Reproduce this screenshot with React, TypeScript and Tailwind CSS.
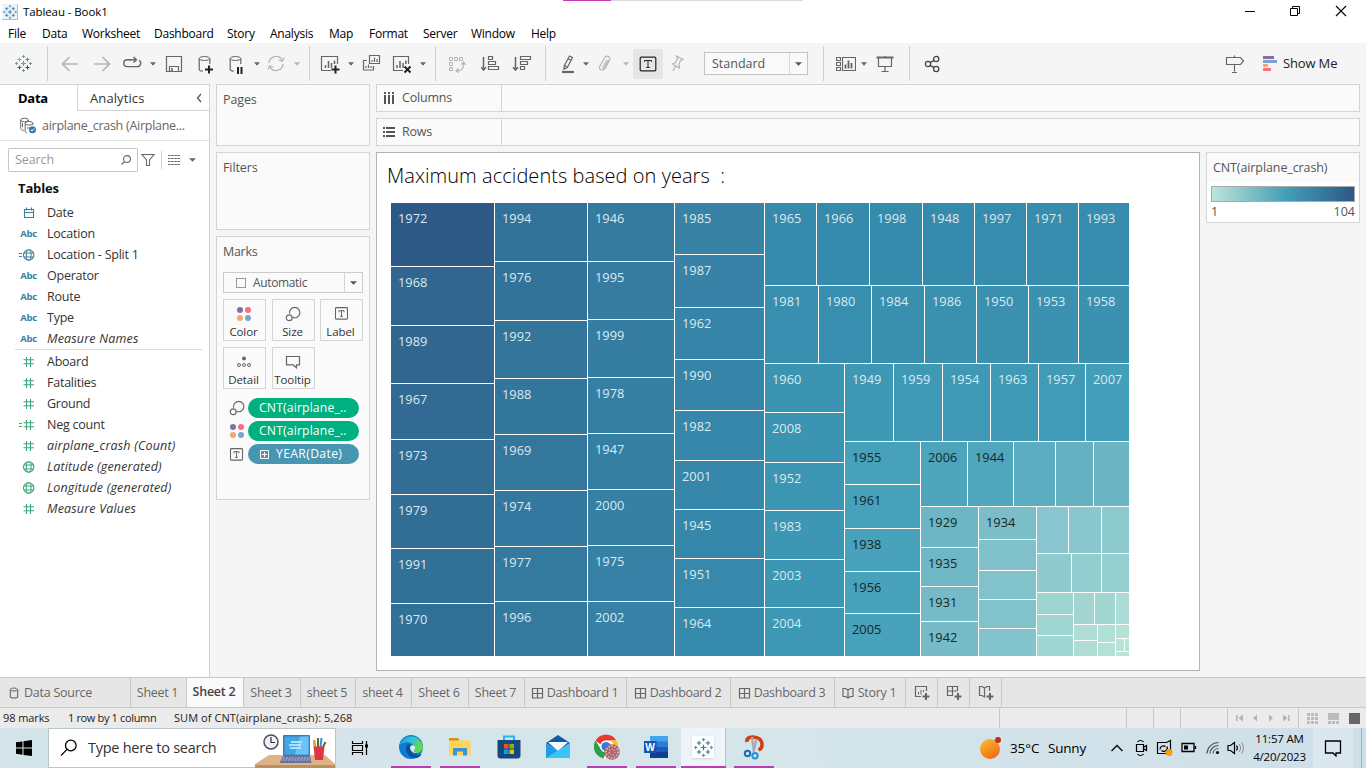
import React from "react";

/* ---------- shared icon pieces ---------- */

type IconProps = { className?: string; children: React.ReactNode; w?: number; h?: number };

function Icon({ className = "", children, w = 20, h = 21 }: IconProps) {
  return (
    <svg
      width={w}
      height={h}
      viewBox={`0 0 ${w} ${h}`}
      fill="none"
      stroke="currentColor"
      strokeWidth="1"
      className={`shrink-0 ${className}`}
    >
      {children}
    </svg>
  );
}

function Caret({ className = "", big = false }: { className?: string; big?: boolean }) {
  return (
    <svg width={big ? 7 : 6} height="4" viewBox="0 0 6 4" preserveAspectRatio="none" className={`shrink-0 fill-current ${className}`}>
      <path d="M0 .2h6L3 3.800z" />
    </svg>
  );
}

function Sep({ className = "" }: { className?: string }) {
  return <div className={`h-[35px] w-px shrink-0 bg-[#d0d0d0] ${className}`} />;
}

function cross(x: number, y: number, r: number) {
  return `M${x - r} ${y}h${2 * r}M${x} ${y - r}v${2 * r}`;
}

function TableauMark({ size, mono = false, className = "" }: { size: number; mono?: boolean; className?: string }) {
  const c = mono
    ? ["#2b7cb0", "#2b7cb0", "#2b7cb0", "#2b7cb0", "#2b7cb0", "#4f95c2"]
    : ["#e8762c", "#eb912c", "#59879b", "#c72035", "#1f447e", "#7199a6"];
  return (
    <svg width={size} height={size} viewBox="0 0 17 17" fill="none" strokeWidth="1" className={`shrink-0 ${className}`}>
      <path d={cross(8.5, 8.5, 2.5)} stroke={c[0]} strokeWidth="1.100" />
      <path d={cross(4.500, 4.500, 2)} stroke={c[1]} />
      <path d={cross(12.500, 4.500, 2)} stroke={c[2]} />
      <path d={cross(4.500, 12.500, 2)} stroke={c[3]} />
      <path d={cross(12.500, 12.500, 2)} stroke={c[4]} />
      <path d={[cross(8.500, 1.500, 1.500), cross(8.500, 15.500, 1.500), cross(1.500, 8.500, 1.500), cross(15.500, 8.500, 1.500)].join("")} stroke={c[5]} />
    </svg>
  );
}

function Dots({ className = "" }: { className?: string }) {
  return (
    <svg width="16" height="16" viewBox="0 0 16 16" className={`shrink-0 ${className}`}>
      <circle cx="4" cy="4" r="3" fill="#83719c" />
      <circle cx="12" cy="4" r="3" fill="#fa6e80" />
      <circle cx="4" cy="12" r="3" fill="#f2a679" />
      <circle cx="12" cy="12" r="3" fill="#7ba3cf" />
    </svg>
  );
}

function SizeIcon({ className = "" }: { className?: string }) {
  return (
    <Icon w={16} h={16} className={className}>
      <path d="M4.600 7.600A5.200 5.200 0 1 1 7.600 11.300" strokeWidth="1.200" />
      <circle cx="4.200" cy="11.800" r="2.900" strokeWidth="1.200" />
    </Icon>
  );
}

function LabelIcon({ className = "" }: { className?: string }) {
  return (
    <Icon w={15} h={13} className={className}>
      <rect x="1.500" y=".6" width="12" height="11.500" rx=".8" strokeWidth="1.100" />
      <path d="M5 5.300V3.700h5v1.600M7.500 3.700v5.600M6.200 9.400h2.600" />
    </Icon>
  );
}

/* ---------- window chrome ---------- */

function TitleBar() {
  return (
    <header className="flex h-6 shrink-0 items-center bg-white font-['Open_Sans',sans-serif] text-[12px] text-black">
      <div className="ml-[2px] flex size-[16px] items-center justify-center border-r border-b border-[#bbb] bg-[#f0f3f5]">
        <TableauMark size={14} mono />
      </div>
      <span className="ml-[5px] text-[11.500px] tracking-[-0.1px]">Tableau - Book1</span>
      <div className="ml-[455px] flex self-start">
        <div className="h-px w-12 bg-[#c239b3]" />
        <div className="h-px w-48 bg-[#dcdcdc]" />
      </div>
      <div className="ml-auto flex items-center gap-[33px] pr-[19px] pb-[3px]">
        <Icon w={12} h={12}><path d="M1 6.500h10" stroke="#000" /></Icon>
        <Icon w={13} h={12}>
          <path d="M1.500 3.500h7v7h-7zM3.500 3V1.500h7v7H9" stroke="#000" />
        </Icon>
        <Icon w={12} h={12}><path d="M1 1l10 10M11 1L1 11" stroke="#000" strokeWidth="1.100" /></Icon>
      </div>
    </header>
  );
}

function MenuBar() {
  const items: [string, string][] = [
    ["File", "w-[34px]"],
    ["Data", "w-10"],
    ["Worksheet", "w-[72px]"],
    ["Dashboard", "w-[73px]"],
    ["Story", "w-[43px]"],
    ["Analysis", "w-[59px]"],
    ["Map", "w-10"],
    ["Format", "w-[54px]"],
    ["Server", "w-12"],
    ["Window", "w-[60px]"],
    ["Help", "w-10"],
  ];
  return (
    <nav className="flex h-[19px] shrink-0 items-center bg-white pl-2 font-['Open_Sans',sans-serif] text-[12px] tracking-[-0.25px] text-black">
      {items.map(([t, w]) => (
        <span key={t} className={`${w} shrink-0 whitespace-nowrap`}>{t}</span>
      ))}
    </nav>
  );
}

function Toolbar() {
  return (
    <div className="flex h-[41px] shrink-0 items-center bg-[#f5f5f5] text-[#666]">
      <TableauMark size={17} className="ml-[15px]" />
      <Sep className="ml-[15px]" />
      <Icon className="ml-3 text-[#b5b5b5]"><path d="M18 11H3M9.500 4L2.500 11l7 7" strokeWidth="1.700" /></Icon>
      <Icon className="ml-3 text-[#b5b5b5]"><path d="M2 11h15M10.500 4l7 7-7 7" strokeWidth="1.700" /></Icon>
      <Icon className="ml-[10px]">
        <path d="M9 6.800H5.200a3.400 3.400 0 0 0 0 6.800h10a3.400 3.400 0 0 0 2-6.200" strokeWidth="1.400" />
        <path d="M7 6.800h7M11.500 4l3 2.800-3 2.800" strokeWidth="1.400" />
      </Icon>
      <Caret className="ml-2" />
      <Icon className="ml-2">
        <path d="M2.500 3.500h15v15h-15zM5.500 18.500v-5h9v5" strokeWidth="1.200" />
        <path d="M8 15v3" strokeWidth="1.600" />
      </Icon>
      <Icon className="ml-[11px]">
        <ellipse cx="9.500" cy="5.500" rx="5.300" ry="2" />
        <path d="M4.200 5.500v11c0 .9 1.500 1.500 3.600 1.700M14.800 5.500V11" strokeWidth="1.200" />
        <path d="M14 12.500v8M10 16.500h8" stroke="#222" strokeWidth="2" />
      </Icon>
      <Icon className="ml-[11px]">
        <ellipse cx="9.500" cy="5.500" rx="5.300" ry="2" />
        <path d="M4.200 5.500v11c0 .9 1.500 1.500 3.600 1.700M14.800 5.500V11" strokeWidth="1.200" />
        <path d="M12 14v7M15.500 14v7" stroke="#222" strokeWidth="2" />
      </Icon>
      <Caret className="ml-2" />
      <Icon className="ml-[6px] text-[#b5b5b5]">
        <path d="M3 10a7 7 0 0 1 13.300-2.500M17 11a7 7 0 0 1-13.300 2.500" strokeWidth="1.300" />
        <path d="M18 4.500l-1.500 3.700-3.700-1.200M2 16.500l1.500-3.700 3.700 1.200" strokeWidth="1.200" />
      </Icon>
      <Caret className="ml-2 text-[#b5b5b5]" />
      <Sep className="ml-[9px]" />
      <Icon className="ml-[10px]">
        <path d="M17.500 11V3.500h-16v14H11" strokeWidth="1.200" />
        <path d="M5.500 15v-3M8.500 15V8M11.500 15v-5M14.500 11V7.500" strokeWidth="1.500" />
        <path d="M15.500 12.500v8M11.500 16.500h8" stroke="#222" strokeWidth="2" />
      </Icon>
      <Caret className="ml-2" />
      <Icon className="ml-2">
        <path d="M7.500 2.500h10v8h-10zM5 7.500H1.500v9.500h10v-4" strokeWidth="1.200" />
        <path d="M10 9V7M12.500 9V4.500M15 9V6M4 15v-2M6.500 15v-3.500M9 15v-2" strokeWidth="1.200" />
      </Icon>
      <Icon className="ml-[10px]">
        <path d="M16.500 11V3.500h-15v14H11" strokeWidth="1.200" />
        <path d="M5 15v-3M8 15V8M11 15v-5M13.800 11V7.500" strokeWidth="1.500" />
        <path d="M12.500 13.500l6 6M18.500 13.500l-6 6" stroke="#222" strokeWidth="2" />
      </Icon>
      <Caret className="ml-2" />
      <Sep className="ml-[9px]" />
      <Icon className="ml-3 text-[#b5b5b5]">
        <path d="M1.500 4.500h3v3h-3zM6.500 4.500h3v3h-3zM11.500 4.500h3v3h-3zM1.500 9.500h3v3h-3zM1.500 14.500h3v3h-3z" />
        <path d="M15.500 9v3.500c0 3-2.500 4.700-5 5.300H8M17.800 12l-2.300-3-2.300 3M10.500 15.500L8 17.800l2.500 2" strokeWidth="1.200" />
      </Icon>
      <Icon className="ml-[13px]">
        <path d="M2.500 4v13M0 14.200l2.500 2.800L5 14.200" strokeWidth="1.500" />
        <path d="M7.500 3.500h4v3h-4zM7.500 8.500h7v3h-7zM7.500 13.500h10v3h-10z" strokeWidth="1.200" />
      </Icon>
      <Icon className="ml-[11px]">
        <path d="M3.500 4v13M1 14.200L3.500 17 6 14.200" strokeWidth="1.500" />
        <path d="M8.500 3.500h10v3h-10zM8.500 8.500h7v3h-7zM8.500 13.500h4v3h-4z" strokeWidth="1.200" />
      </Icon>
      <Sep className="ml-[13px]" />
      <Icon className="ml-3">
        <path d="M11.500 3l3 1.500-5.200 10-3.400 1.800.4-3.600zM10 5.800l3 1.500M6.500 12.500l3 1.700" strokeWidth="1.200" />
        <path d="M4 19h12" strokeWidth="2.200" />
      </Icon>
      <Caret className="ml-[5px]" />
      <Icon className="ml-[6px] text-[#b5b5b5]">
        <path d="M13.500 7l-4.300 8.500c-1.500 3-6 1-4.500-2L9.500 5c1.800-3.500 6.800-1.200 5 2.300l-4 7.700c-1 1.800-3.300.8-2.500-1L11.800 7" strokeWidth="1.100" />
      </Icon>
      <Caret className="ml-2 text-[#b5b5b5]" />
      <div className="ml-1 flex size-[30px] shrink-0 items-center justify-center bg-[#e5e5e5] text-[#222]">
        <Icon w={18} h={16}>
          <rect x="1.200" y="1.200" width="15.600" height="13.600" rx="1" strokeWidth="1.200" />
          <path d="M5.500 6V4.500h7V6M9 4.500v7.500M7.300 11.500h3.400" />
        </Icon>
      </div>
      <Icon className="ml-1 text-[#b5b5b5]">
        <path d="M9.500 3l6.500 3.500-2.500 1-1.500 4 .5 3.500-7-4 3-1.500 2-3.800zM8.500 13l-2.500 5" strokeWidth="1.200" />
      </Icon>
      <div className="ml-[17px] flex h-[23px] w-[104px] shrink-0 items-center border border-[#c4c4c4] bg-[#f9f9f9] font-['Open_Sans',sans-serif] text-[12.500px] text-[#555]">
        <span className="w-[85px] border-r border-[#d8d8d8] pl-[7px] leading-[21px]">Standard</span>
        <Caret big className="ml-[5px]" />
      </div>
      <Sep className="ml-[15px]" />
      <Icon className="ml-3">
        <path d="M.5 4.500h4v3h-4zM.5 9.500h4v3h-4zM.5 14.500h4v3h-4zM6.500 4.500h13v13h-13z" strokeWidth="1.100" />
        <path d="M9.500 15.500v-4M12.500 15.500v-8M15.500 15.500V10" strokeWidth="1.800" />
      </Icon>
      <Caret className="ml-[5px]" />
      <Icon className="ml-2">
        <path d="M1.500 4.500h17" strokeWidth="2" />
        <path d="M3.500 5v8.500h13V5M10 13.500v5M10 3v1M6.500 18.500h7" strokeWidth="1.200" />
      </Icon>
      <Sep className="ml-[14px]" />
      <Icon className="ml-3 text-[#444]">
        <circle cx="6" cy="11" r="2.600" strokeWidth="1.300" />
        <circle cx="14.200" cy="6" r="2.600" strokeWidth="1.300" />
        <circle cx="14.200" cy="16" r="2.600" strokeWidth="1.300" />
        <path d="M8.200 9.600l3.800-2.200M8.200 12.400l3.800 2.200" strokeWidth="1.300" />
      </Icon>
      <Icon className="ml-auto">
        <path d="M1.500 4.500h14l3 3.500-3 3.500h-14zM9.500 2.500v2M9.500 11.500v7M7 19.500h5" strokeWidth="1.200" />
      </Icon>
      <svg width="15" height="16" viewBox="0 0 15 16" className="ml-[18px] shrink-0">
        <path d="M0 0h11v3H0z" fill="#8a6f9d" />
        <path d="M0 4h14v3H0z" fill="#7ba3cf" />
        <path d="M0 8h5v3H0z" fill="#f2a679" />
        <path d="M0 12h8v3H0z" fill="#fa6e80" />
      </svg>
      <span className="ml-[5px] w-[83px] pb-px font-['Open_Sans',sans-serif] text-[13px] tracking-[-0.15px] text-[#222]">Show Me</span>
    </div>
  );
}

/* ---------- data pane ---------- */

function Hash({ calc = false }: { calc?: boolean }) {
  return (
    <Icon w={16} h={12} className="text-[#3ba577]">
      <path d="M7.500 1v10M11.500 1v10M4.500 3.800h10.500M4.500 7.800h10.500" strokeWidth="1.100" />
      {calc && <path d="M0 4.500h3M0 7.500h3" />}
    </Icon>
  );
}

function Globe({ calc = false, tone }: { calc?: boolean; tone: string }) {
  return (
    <Icon w={16} h={12} className={tone}>
      <circle cx="9.700" cy="6" r="5.200" strokeWidth="1.100" />
      <ellipse cx="9.700" cy="6" rx="2.400" ry="5.200" />
      <path d="M5 4h9.400M5 8h9.400" />
      {calc && <path d="M0 4.500h3M0 7.500h3" />}
    </Icon>
  );
}

function Abc() {
  return <span className="font-['Open_Sans',sans-serif] text-[9.500px] font-bold tracking-[-0.2px] text-[#3a7f9f]">Abc</span>;
}

function CalendarIcon() {
  return (
    <Icon w={12} h={12} className="text-[#3a7f9f]">
      <path d="M1.500 2.500h9v8h-9zM1.500 5.500h9M3.500 .5v3M8.500 .5v3" strokeWidth="1.100" />
    </Icon>
  );
}

type Field = { icon: React.ReactNode; text: string; italic?: boolean };

function FieldRow({ icon, text, italic }: Field) {
  return (
    <div className="flex h-[21px] items-center text-[12.500px] text-[#333]">
      <div className="flex w-[37px] shrink-0 items-center justify-end">{icon}</div>
      <span className={`ml-[10px] whitespace-nowrap ${italic ? "tracking-[0.180px] italic" : "tracking-[-0.240px]"}`}>{text}</span>
    </div>
  );
}

const padR = (n: React.ReactNode) => <span className="flex pr-[2px]">{n}</span>;

const dimensions: Field[] = [
  { icon: padR(<CalendarIcon />), text: "Date" },
  { icon: <Abc />, text: "Location" },
  { icon: padR(<Globe calc tone="text-[#3a7f9f]" />), text: "Location - Split 1" },
  { icon: <Abc />, text: "Operator" },
  { icon: <Abc />, text: "Route" },
  { icon: <Abc />, text: "Type" },
  { icon: <Abc />, text: "Measure Names", italic: true },
];

const measures: Field[] = [
  { icon: padR(<Hash />), text: "Aboard" },
  { icon: padR(<Hash />), text: "Fatalities" },
  { icon: padR(<Hash />), text: "Ground" },
  { icon: padR(<Hash calc />), text: "Neg count" },
  { icon: padR(<Hash />), text: "airplane_crash (Count)", italic: true },
  { icon: padR(<Globe tone="text-[#3ba577]" />), text: "Latitude (generated)", italic: true },
  { icon: padR(<Globe tone="text-[#3ba577]" />), text: "Longitude (generated)", italic: true },
  { icon: padR(<Hash />), text: "Measure Values", italic: true },
];

function DataPane() {
  return (
    <aside className="flex w-[210px] shrink-0 flex-col border-r border-[#d0d0d0] bg-white">
      <div className="flex h-[27px] shrink-0">
        <div className="flex w-[77px] items-center border-t border-[#d4d4d4] pl-[18px] text-[13px] font-bold tracking-[-0.3px] text-black">Data</div>
        <div className="flex flex-1 items-center border-t border-b border-l border-[#d4d4d4] pl-3 text-[13px] text-[#333]">
          <span className="tracking-[0.100px]">Analytics</span>
          <Icon w={8} h={12} className="mr-[6px] ml-auto text-[#555]">
            <path d="M6 2L2.500 6 6 10" strokeWidth="1.300" />
          </Icon>
        </div>
      </div>
      <div className="flex h-[30px] shrink-0 items-center border-b border-[#e2e2e2] text-[12.500px] text-[#666]">
        <Icon w={18} h={17} className="ml-5">
          <ellipse cx="4.500" cy="3" rx="3.800" ry="1.800" />
          <path d="M.7 3v8.500c0 1 1.300 1.700 3 2M8.300 3v1" />
          <ellipse cx="9" cy="6.300" rx="3.800" ry="1.800" />
          <path d="M5.200 6.300v8c0 .8.700 1.300 1.800 1.600M12.800 6.300V8M2.500 6v4M7 11h3" />
          <circle cx="12.500" cy="12.700" r="3.500" fill="#2f7f9f" stroke="none" />
          <path d="M10.800 12.800l1.300 1.200 2.200-2.500" stroke="#fff" />
        </Icon>
        <span className="ml-1 tracking-[-0.270px] whitespace-nowrap">airplane_crash (Airplane...</span>
      </div>
      <div className="mt-[7px] flex h-[24px] shrink-0 items-center text-[#666]">
        <div className="ml-2 flex h-[24px] w-[130px] items-center rounded-[1px] border border-[#c8c8c8] pl-[6px] text-[12.500px] text-[#999]">
          <span className="tracking-[-0.1px]">Search</span>
          <Icon w={12} h={12} className="mr-[5px] ml-auto text-[#666]">
            <circle cx="7" cy="5" r="3.400" strokeWidth="1.100" />
            <path d="M4.600 7.500L1.500 10.500" strokeWidth="1.200" />
          </Icon>
        </div>
        <Icon w={14} h={14} className="ml-[3px]">
          <path d="M1 1.500h12L8.500 7v5.500h-3V7z" strokeWidth="1.100" />
        </Icon>
        <div className="ml-[6px] h-[18px] w-px bg-[#d4d4d4]" />
        <Icon w={12} h={10} className="ml-[6px]">
          <path d="M0 .5h12M0 3.500h12M0 6.500h12M0 9.500h12" strokeDasharray="2.500 .67" strokeWidth="1.200" />
        </Icon>
        <Caret big className="ml-[9px]" />
      </div>
      <div className="mt-[6px] flex h-[20px] shrink-0 items-center pl-[18px] text-[13px] font-bold tracking-[-0.150px] text-[#111]">Tables</div>
      <div className="mt-[4px]">
        {dimensions.map((f) => <FieldRow key={f.text} {...f} />)}
      </div>
      <div className="mr-[7px] ml-[15px] h-px shrink-0 bg-[#dcdcdc]" />
      <div className="mt-[1px]">
        {measures.map((f) => <FieldRow key={f.text} {...f} />)}
      </div>
    </aside>
  );
}

/* ---------- shelves and cards ---------- */

function MarkButton({ icon, label }: { icon: React.ReactNode; label: string }) {
  return (
    <div className="flex h-[42px] w-[43px] flex-col items-center border border-[#d4d4d4] text-[#666]">
      <div className="flex h-[26px] items-center pt-px pr-px">{icon}</div>
      <span className="pr-[2px] text-[11.500px] leading-[12px] tracking-[-0.1px] text-[#333]">{label}</span>
    </div>
  );
}

function Pill({ icon, children, tone }: { icon: React.ReactNode; children: React.ReactNode; tone: string }) {
  return (
    <div className="flex h-5 items-center text-[#666]">
      <div className="flex w-[25px] shrink-0 items-center justify-start pl-[6px]">{icon}</div>
      <div className={`flex h-5 w-[111px] items-center rounded-full pl-[11px] text-[12.200px] font-medium tracking-[0.150px] whitespace-nowrap text-white ${tone}`}>{children}</div>
    </div>
  );
}

function Cards() {
  return (
    <section className="ml-[6px] flex w-[154px] shrink-0 flex-col text-[12.500px] text-[#555]">
      <div className="h-[62px] border border-[#d4d4d4] bg-[#fafafa] pt-[6px] pl-[6px] tracking-[-0.1px]">Pages</div>
      <div className="mt-[6px] h-[78px] border border-[#d4d4d4] bg-[#fafafa] pt-[6px] pl-[6px] tracking-[-0.1px]">Filters</div>
      <div className="mt-[6px] h-[264px] border border-[#d4d4d4] bg-[#fafafa] pl-[6px]">
        <div className="pt-[6px] leading-[18px] tracking-[-0.3px]">Marks</div>
        <div className="mt-[11px] flex h-[21px] w-[140px] items-center border border-[#ccc] text-[12px]">
          <div className="ml-[12px] size-[10px] border border-[#999]" />
          <span className="ml-[7px] tracking-[-0.350px]">Automatic</span>
          <div className="ml-auto flex h-[19px] w-[18px] items-center justify-center border-l border-[#d4d4d4]"><Caret big /></div>
        </div>
        <div className="mt-[6px] grid w-[140px] grid-cols-[49px_48px_43px] gap-y-[6px]">
          <MarkButton icon={<Dots />} label="Color" />
          <MarkButton icon={<SizeIcon />} label="Size" />
          <MarkButton icon={<LabelIcon />} label="Label" />
          <MarkButton
            icon={
              <Icon w={16} h={12}>
                <circle cx="8" cy="2.500" r="2" fill="currentColor" stroke="none" />
                <circle cx="3" cy="9" r="1.500" /><circle cx="8" cy="9" r="1.500" /><circle cx="13" cy="9" r="1.500" />
              </Icon>
            }
            label="Detail"
          />
          <MarkButton
            icon={<Icon w={16} h={14}><path d="M1.500 1.500h13v8.300H11.500v3L8 9.800H1.500z" strokeWidth="1.200" /></Icon>}
            label="Tooltip"
          />
        </div>
        <div className="mt-[9px] flex flex-col gap-[3px]">
          <Pill icon={<SizeIcon />} tone="bg-[#00b180]">CNT(airplane_..</Pill>
          <Pill icon={<Dots />} tone="bg-[#00b180]">CNT(airplane_..</Pill>
          <Pill icon={<LabelIcon />} tone="bg-[#4996b2]">
            <Icon w={9} h={9} className="mr-[7px] ml-px"><path d="M.5.5h8v8h-8zM4.500 2v5M2 4.500h5" /></Icon>
            <span className="tracking-[0.350px]">YEAR(Date)</span>
          </Pill>
        </div>
      </div>
    </section>
  );
}

function Shelf({ icon, label }: { icon: React.ReactNode; label: string }) {
  return (
    <div className="flex h-[28px] shrink-0 items-center border border-[#d4d4d4] bg-[#fafafa] text-[12.500px] text-[#555]">
      <div className="flex h-full w-[125px] items-center border-r border-[#d4d4d4] pl-[6px]">
        {icon}
        <span className="ml-[7px] tracking-[-0.200px]">{label}</span>
      </div>
    </div>
  );
}

/* ---------- treemap ---------- */

type Tile = [number, number, number, number, string, string?];

function stack(x: number, x2: number, ys: number[], colors: string[], labels: string[] = []): Tile[] {
  return colors.map((c, i) => [x, ys[i], x2 - x, ys[i + 1] - ys[i] - 1, c, labels[i]]);
}
function strip(y: number, y2: number, xs: number[], colors: string[], labels: string[] = []): Tile[] {
  return colors.map((c, i) => [xs[i], y, xs[i + 1] - xs[i] - 1, y2 - y, c, labels[i]]);
}
const yrs = (s: string) => s.split(" ");

const tiles: Tile[] = [
  ...stack(391, 494, [203, 267, 326, 384, 440, 495, 549, 604, 657],
    ["#2c5985", "#316690", "#31668f", "#326a93", "#316d95", "#316e96", "#317097", "#317198"],
    yrs("1972 1968 1989 1967 1973 1979 1991 1970")),
  ...stack(495, 587, [203, 262, 321, 379, 435, 491, 547, 602, 657],
    ["#327299", "#327399", "#32749a", "#33769c", "#33779d", "#33789e", "#34799e", "#347a9f"],
    yrs("1994 1976 1992 1988 1969 1974 1977 1996")),
  ...stack(588, 674, [203, 262, 320, 378, 434, 490, 546, 602, 657],
    ["#357b9f", "#357ca0", "#357ea1", "#357fa2", "#357fa3", "#3680a4", "#3681a5", "#3681a5"],
    yrs("1946 1995 1999 1978 1947 2000 1975 2002")),
  ...stack(675, 764, [203, 255, 308, 360, 411, 461, 510, 559, 608, 657],
    ["#3782a5", "#3782a6", "#3684a7", "#3685a8", "#3687a9", "#3687aa", "#3688ab", "#3689ab", "#368aac"],
    yrs("1985 1987 1962 1990 1982 2001 1945 1951 1964")),
  ...strip(203, 285, [765, 817, 870, 923, 975, 1027, 1079, 1130],
    ["#368aac", "#368aac", "#368bac", "#368bad", "#368cad", "#378dad", "#378dad"],
    yrs("1965 1966 1998 1948 1997 1971 1993")),
  ...strip(286, 363, [765, 819, 872, 925, 977, 1029, 1079, 1130],
    ["#378eae", "#378eae", "#388fae", "#3990af", "#3990af", "#3a91b0", "#3a92b0"],
    yrs("1981 1980 1984 1986 1950 1953 1958")),
  ...stack(765, 844, [364, 413, 463, 511, 560, 608, 657],
    ["#3b94b1", "#3b94b1", "#3c95b2", "#3d96b3", "#3d96b3", "#3e97b4"],
    yrs("1960 2008 1952 1983 2003 2004")),
  ...strip(364, 441, [845, 894, 943, 991, 1039, 1086, 1130],
    ["#3e98b4", "#3f99b5", "#3f99b5", "#409ab6", "#419bb7", "#439eb9"],
    yrs("1949 1959 1954 1963 1957 2007")),
  ...stack(845, 920, [442, 485, 529, 572, 614, 657],
    ["#47a1ba", "#47a1ba", "#48a2bb", "#48a2bb", "#48a2bb"],
    yrs("1955 1961 1938 1956 2005")),
  ...strip(442, 506, [921, 968, 1014, 1056, 1094, 1130],
    ["#4ea5bb", "#50a6bc", "#5cadc1", "#65b1c1", "#6ab4c3"], yrs("2006 1944")),
  ...stack(921, 978, [507, 548, 587, 622, 657],
    ["#6db6c4", "#6fb7c5", "#75bac6", "#77bbc7"], yrs("1929 1935 1931 1942")),
  ...stack(979, 1036, [507, 540, 571, 600, 629, 657],
    ["#7bbec9", "#80c1cb", "#81c2cb", "#82c2cb", "#83c3cb"], ["1934"]),
  ...strip(507, 553, [1037, 1069, 1102, 1130], ["#89c5ce", "#89c6cd", "#8ccacd"]),
  ...strip(554, 592, [1037, 1072, 1102, 1130], ["#8fcbce", "#93cdcf", "#95cfd0"]),
  ...stack(1037, 1073, [593, 615, 636, 657], ["#9ed5d1", "#9fd6d2", "#a1d7d3"]),
  ...strip(593, 624, [1074, 1095, 1116, 1130], ["#a2d5d2", "#a1d6d1", "#addbd6"]),
  ...stack(1074, 1097, [625, 641, 657], ["#afddd6", "#afddd6"]),
  ...stack(1098, 1115, [625, 643, 657], ["#b0e0d6", "#b4e1d6"]),
  ...stack(1116, 1129, [625, 639], ["#b5e2d7"]),
  ...strip(639, 651, [1116, 1125, 1130], ["#b8e4d8", "#b8e4d8"]),
  ...stack(1116, 1129, [652, 657], ["#b9e5d9"]),
];

const darkText = new Set(yrs("1955 1961 1938 1956 2005 2006 1944 1929 1935 1931 1942 1934"));

function Treemap() {
  return (
    <svg width="738" height="453" viewBox="391 203 738 453" className="ml-[14px] block font-['Open_Sans',sans-serif] text-[12.800px]">
      {tiles.map(([x, y, w, h, fill, label], i) => (
        <g key={i}>
          <rect x={x} y={y} width={w} height={h} fill={fill} />
          {label && (
            <text x={x + 7} y={y + 20} fill={darkText.has(label) ? "#16262b" : "#dce9ef"}>{label}</text>
          )}
        </g>
      ))}
    </svg>
  );
}

function Viz() {
  return (
    <section className="ml-[6px] flex min-w-0 flex-1 flex-col pr-[6px]">
      <Shelf
        label="Columns"
        icon={<Icon w={12} h={12} className="text-[#555]"><path d="M2 0v12M6 0v12M10 0v12" strokeWidth="2" strokeDasharray="2 1 9" /></Icon>}
      />
      <div className="h-[6px]" />
      <Shelf
        label="Rows"
        icon={<Icon w={12} h={12} className="text-[#555]"><path d="M0 2h12M0 6h12M0 10h12" strokeWidth="2" strokeDasharray="2 1 9" /></Icon>}
      />
      <div className="mt-[6px] flex items-start">
        <div className="h-[519px] w-[824px] border border-[#b4b4b4] bg-white">
          <h1 className="h-[50px] pt-[9px] pl-[10px] text-[20px] leading-[28px] font-light tracking-[0.050px] whitespace-pre text-black">Maximum accidents based on years  :</h1>
          <Treemap />
        </div>
        <div className="ml-[6px] h-[71px] w-[154px] border border-[#d4d4d4] bg-white text-[12.500px] text-[#555]">
          <div className="h-[29px] bg-[#fafafa] pt-[6px] pl-[6px] leading-[18px] tracking-[-0.100px]">CNT(airplane_crash)</div>
          <div className="mx-1 mt-[4px] h-[16px] border border-[#aaa] bg-linear-to-r from-[#bce4d8] via-[#45a2b9] to-[#2c5985]" />
          <div className="mx-1 flex justify-between leading-[19px]"><span>1</span><span>104</span></div>
        </div>
      </div>
    </section>
  );
}

/* ---------- sheet tabs and status ---------- */

function GridIcon() {
  return (
    <Icon w={13} h={12} className="mr-[3px]">
      <path d="M1.500 1.500h10v9.500h-10zM6.500 1.500v9.500M1.500 6.500h10" strokeWidth="1.200" />
    </Icon>
  );
}

const tabs: { t: string; w: string; on?: boolean; icon?: React.ReactNode }[] = [
  { t: "Sheet 1", w: "w-[56px]" },
  { t: "Sheet 2", w: "w-[57px]", on: true },
  { t: "Sheet 3", w: "w-[57px]" },
  { t: "sheet 5", w: "w-[55px]" },
  { t: "sheet 4", w: "w-[56px]" },
  { t: "Sheet 6", w: "w-[57px]" },
  { t: "Sheet 7", w: "w-[56px]" },
  { t: "Dashboard 1", w: "w-[102px]", icon: <GridIcon /> },
  { t: "Dashboard 2", w: "w-[104px]", icon: <GridIcon /> },
  { t: "Dashboard 3", w: "w-[104px]", icon: <GridIcon /> },
  {
    t: "Story 1",
    w: "w-[71px]",
    icon: (
      <Icon w={12} h={12} className="mr-[4px]"><path d="M1 1.500h2.500L6 3l2.500-1.500H11v8H8.500L6 11 3.500 9.500H1zM6 3v8" strokeWidth="1.200" /></Icon>
    ),
  },
];

function SheetTabs() {
  const plus = <path d="M12 8v7M8.500 11.500h7" strokeWidth="2" />;
  return (
    <div className="flex h-[31px] shrink-0 border-t border-b border-[#c8c8c8] bg-[#e6e6e6] text-[12.500px] text-[#666]">
      <div className="flex w-[131px] items-center border-r border-[#c8c8c8] pl-[9px]">
        <Icon w={10} h={12}>
          <ellipse cx="5" cy="2.500" rx="3.700" ry="1.500" />
          <path d="M1.300 2.500v7c0 2 7.400 2 7.400 0v-7" strokeWidth="1.100" />
        </Icon>
        <span className="ml-[5px] tracking-[-0.250px]">Data Source</span>
      </div>
      {tabs.map(({ t, w, on, icon }) => (
        <div
          key={t}
          className={`flex ${w} shrink-0 items-center justify-center border-r border-[#c8c8c8] whitespace-nowrap ${on ? "bg-[#fafafa] pr-[2px] pb-[2px] font-semibold tracking-[-0.250px] text-[#444]" : "pr-[2px] tracking-[-0.300px]"}`}
        >
          {icon}
          {t}
        </div>
      ))}
      <div className="flex w-8 items-center justify-center border-r border-[#c8c8c8]">
        <Icon w={16} h={16}><path d="M12.500 6V1.500h-11v10H7" strokeWidth="1.200" /><path d="M4.500 9.500V7M7 9.500V5M9.500 7V5" />{plus}</Icon>
      </div>
      <div className="flex w-8 items-center justify-center border-r border-[#c8c8c8]">
        <Icon w={16} h={16}><path d="M11.500 6V1.500h-10v9H7M6.500 1.500v9M1.500 6h10" strokeWidth="1.200" />{plus}</Icon>
      </div>
      <div className="flex w-8 items-center justify-center border-r border-[#c8c8c8]">
        <Icon w={16} h={16}><path d="M11.500 6V1.500H9L6.500 3 4 1.500H1.500v9H4L6.500 12V3" strokeWidth="1.200" />{plus}</Icon>
      </div>
    </div>
  );
}

function StatusBar() {
  return (
    <div className="flex h-5 shrink-0 items-stretch bg-[#ebebeb] text-[11px] leading-[19px] text-[#222]">
      <span className="ml-[3px] w-[65px] tracking-[-0.100px]">98 marks</span>
      <span className="w-[106px] tracking-[-0.350px]">1 row by 1 column</span>
      <span className="tracking-[0.070px]">SUM of CNT(airplane_crash): 5,268</span>
      <div className="ml-auto flex">
        <div className="w-[127px] border-l border-[#c8c8c8]" />
        <div className="w-[27px] border-l border-[#c8c8c8]" />
        <div className="w-[27px] border-l border-[#c8c8c8]" />
        <div className="w-[47px] border-l border-[#c8c8c8]" />
        <div className="flex w-[71px] items-center justify-around border-l border-[#c8c8c8] px-1 text-[#b4b4b4]">
          <svg width="8" height="8" className="fill-current"><path d="M0 1h1.500v6H0zM7 .5v7L2.500 4z" /></svg>
          <svg width="8" height="8" className="fill-current"><path d="M6 .5v7L2 4z" /></svg>
          <svg width="8" height="8" className="fill-current"><path d="M2 .5v7L6 4z" /></svg>
          <svg width="8" height="8" className="fill-current"><path d="M6 1h1.500v6H6zM1 .5v7L5.500 4z" /></svg>
        </div>
        <div className="flex w-[68px] items-center justify-between border-l border-[#c8c8c8] pr-[6px] pl-[8px]">
          <svg width="11" height="11" className="fill-[#bcbcbc]">
            <path d="M0 0h3v3H0zM4 0h3v3H4zM8 0h3v3H8zM0 4h3v3H0zM4 4h3v3H4zM8 4h3v3H8zM0 8h3v3H0zM4 8h3v3H4zM8 8h3v3H8z" />
          </svg>
          <svg width="11" height="11" className="fill-[#bcbcbc]"><path d="M0 0h11v7H0zM0 8h3v3H0zM4 8h3v3H4zM8 8h3v3H8z" /></svg>
          <div className="size-[11px] bg-[#666]" />
        </div>
      </div>
    </div>
  );
}

/* ---------- taskbar ---------- */

function TaskApp({ className, bar, children }: { className: string; bar?: string; children: React.ReactNode }) {
  return (
    <div className={`flex h-10 shrink-0 flex-col items-center ${className}`}>
      <div className="flex h-[38px] items-center">{children}</div>
      {bar && <div className={`h-[2px] bg-[#b93db5] ${bar}`} />}
    </div>
  );
}

function DeskScene() {
  return (
    <svg width="80" height="39" viewBox="0 0 80 39" className="ml-auto shrink-0">
      <path d="M14 26h56l10 9v4H0v-4z" fill="#dcb488" />
      <path d="M0 36h80v3H0z" fill="#bd9060" />
      <circle cx="16" cy="13" r="7" fill="#eef0f4" stroke="#4a5060" strokeWidth="1.500" />
      <path d="M16 8v5.500h4" stroke="#333" strokeWidth="1.200" fill="none" />
      <rect x="28" y="6" width="27" height="21" rx="1" fill="#5b6fa3" />
      <rect x="29.500" y="7.500" width="24" height="18" fill="#39a9ea" />
      <path d="M45 7.500h8.500v18H40z" fill="#67c4f5" />
      <path d="M36 13h11M34 16h12M35 19h11" stroke="#d9f0ff" strokeWidth="1.300" />
      <path d="M28 27h27l1.500 7h-32z" fill="#66739f" />
      <path d="M28 29h26M27 31h28" stroke="#b5bedb" strokeWidth="1" strokeDasharray="2 1" />
      <path d="M60 18l-1-7M63 18V9M68 18l2.500-5" stroke="#5a6a3a" strokeWidth="2" />
      <path d="M65.500 18l1-9" stroke="#2f8fd0" strokeWidth="2" />
      <path d="M60 18l-1-7" stroke="#e8a23a" strokeWidth="2" />
      <path d="M58.500 17.500h11l-1.500 13.500h-8z" fill="#dd3542" />
    </svg>
  );
}

function Taskbar() {
  return (
    <footer className="flex h-10 shrink-0 items-center bg-linear-to-r from-[#d3e3ea] via-[#d5e6eb] to-[#cfdfe9] font-['Open_Sans',sans-serif] text-black">
      <svg width="16" height="16" viewBox="0 0 16 16" className="ml-4 shrink-0">
        <path d="M0 2.300L6.500 1.400v6.200H0zM7.500 1.200L16 0v7.600H7.500zM0 8.500h6.500v6.200L0 13.800zM7.500 8.500H16V16l-8.500-1.100z" />
      </svg>
      <div className="ml-4 flex h-10 w-[288px] shrink-0 items-center border border-[#b9c6cc] bg-white">
        <Icon w={18} h={18} className="ml-[11px] text-black">
          <circle cx="10.800" cy="6.500" r="5.300" strokeWidth="1.300" />
          <path d="M7 10.400L1 16.500" strokeWidth="1.300" />
        </Icon>
        <span className="ml-[10px] text-[14.500px] tracking-[-0.260px] whitespace-nowrap text-[#333]">Type here to search</span>
        <DeskScene />
      </div>
      <Icon w={18} h={16} className="ml-[15px] text-black">
        <path d="M1.500 1v2.500h10V1M1.500 15v-2.500h10V15M1.500 5.500h10v5h-10zM15.500 1v14" strokeWidth="1.200" />
        <path d="M14 4.500h3v3h-3z" fill="#000" stroke="none" />
      </Icon>
      <TaskApp className="ml-[22px] w-10" bar="w-10">
        <svg width="26" height="26" viewBox="0 0 26 26">
          <defs>
            <linearGradient id="edgeTop" x1="0" y1="0" x2="1" y2=".3">
              <stop offset="0" stopColor="#2390d8" /><stop offset=".5" stopColor="#2fc0d8" /><stop offset="1" stopColor="#66d94a" />
            </linearGradient>
          </defs>
          <circle cx="13" cy="13" r="12" fill="#0f7bd0" />
          <path d="M1.500 11A12 12 0 0 1 25 13c0 4-3.500 6-7 6-2.500 0-3.500-1-2.500-2.500C18 12 13 7 8 8.500 4 9 2 10.500 1.500 11z" fill="url(#edgeTop)" />
          <path d="M9 11c-3 5 1 13 9 13 2 0 5-2 5.500-4-3 1.500-9 1-10-3-.5-2 .5-3 1-4-1.500-2.500-4-3-5.500-2z" fill="#0b4f9e" />
          <path d="M12 13.500c0-2 3-3 4.500-1.500s.5 3-.7 4.500c-.5 1.200.4 2 2.200 2.500-3.500.2-6-2.500-6-5.500z" fill="#d8e8ee" />
        </svg>
      </TaskApp>
      <TaskApp className="ml-[9px] w-10" bar="w-10">
        <svg width="22" height="20" viewBox="0 0 22 20">
          <path d="M0 1h9l2 3H0z" fill="#d9940b" />
          <path d="M0 3.500h21.500V18H0z" fill="#ffd35c" />
          <path d="M4 18.500V11h14v7.500h-4v-4H8v4z" fill="#3b93d6" />
        </svg>
      </TaskApp>
      <TaskApp className="ml-[9px] w-10">
        <svg width="24" height="26" viewBox="0 0 24 26">
          <path d="M7 6V2.500h10V6" fill="none" stroke="#2ab3ec" strokeWidth="2" />
          <path d="M.5 6h23v15.500a3 3 0 0 1-3 3h-17a3 3 0 0 1-3-3z" fill="#15487e" />
          <path d="M7 10h4.500v4.500H7z" fill="#f25022" /><path d="M12.500 10H17v4.500h-4.500z" fill="#7fba00" />
          <path d="M7 15.500h4.500V20H7z" fill="#00a4ef" /><path d="M12.500 15.500H17V20h-4.500z" fill="#ffb900" />
        </svg>
      </TaskApp>
      <TaskApp className="ml-[9px] w-10">
        <svg width="24" height="24" viewBox="0 0 24 24">
          <path d="M0 8L12 0l12 8-12 8z" fill="#0f5aa6" />
          <path d="M3 8h18l-9 8z" fill="#f4f8fb" />
          <path d="M0 8l12 8 12-8v15H0z" fill="#1d9ae8" />
          <path d="M0 23L24 8v15z" fill="#3cc3f5" />
          <path d="M2 7h20L12 15.500z" fill="#f4f8fb" />
        </svg>
      </TaskApp>
      <TaskApp className="ml-[9px] w-10" bar="w-10">
        <svg width="26" height="26" viewBox="0 0 26 26">
          <circle cx="12" cy="12.500" r="12" fill="#fff" />
          <path d="M1.600 6.500a12 12 0 0 1 20.800 0H12a6 6 0 0 0-5.500 4z" fill="#e33b2e" />
          <path d="M1.600 6.500L7 15.500a6 6 0 0 0 5 3l-2.500 6A12 12 0 0 1 1.600 6.500z" fill="#2aa04a" />
          <path d="M22.400 6.500A12 12 0 0 1 12 24.500l5-9a6 6 0 0 0 0-9z" fill="#fbc116" />
          <circle cx="12" cy="12.500" r="5.700" fill="#fff" /><circle cx="12" cy="12.500" r="4.600" fill="#2f7de1" />
          <circle cx="18" cy="18" r="7.800" fill="#a9646c" />
          <circle cx="18" cy="18" r="6" fill="none" stroke="#e0aaae" strokeWidth="2" strokeDasharray="1.500 1.500" />
          <circle cx="18" cy="18" r="2.800" fill="none" stroke="#dba7a9" strokeWidth="2" strokeDasharray="1 1.500" />
        </svg>
      </TaskApp>
      <TaskApp className="ml-[9px] w-10" bar="w-10">
        <svg width="24" height="22" viewBox="0 0 24 22" className="font-['Open_Sans',sans-serif]">
          <path d="M6 0h18v6H6z" fill="#41a5ee" /><path d="M6 5.500h18V11H6z" fill="#2b7cd3" />
          <path d="M6 11h18v5.500H6z" fill="#185abd" /><path d="M6 16h18v6H6z" fill="#103f91" />
          <path d="M0 5h12.500v12H0z" fill="#1a52ae" />
          <text x="6.200" y="14.800" textAnchor="middle" fontSize="10" fontWeight="bold" fill="#fff">W</text>
        </svg>
      </TaskApp>
      <TaskApp className="ml-[5px] w-[45px] border-r border-[#b7c4cb] bg-[#eef4f7]" bar="w-[45px]">
        <div className="flex size-[22px] items-center justify-center bg-white shadow-sm"><TableauMark size={19} mono /></div>
      </TaskApp>
      <TaskApp className="ml-2 w-10" bar="w-10">
        <svg width="22" height="26" viewBox="0 0 22 26" fill="none">
          <path d="M4 8C3 3 9 2.500 13 3.500c7 1.500 8 10 2.500 12.500" stroke="#cf3f17" strokeWidth="3.500" />
          <path d="M9 3l2 14M13.500 5l-3 13" stroke="#a9adb3" strokeWidth="2.500" />
          <circle cx="4.500" cy="19.500" r="2.700" stroke="#1b6dbd" strokeWidth="2" />
          <circle cx="12" cy="21.800" r="2.700" stroke="#2390e0" strokeWidth="2" />
        </svg>
      </TaskApp>
      <div className="ml-auto flex items-center">
        <svg width="22" height="24" viewBox="0 0 22 24">
          <defs>
            <linearGradient id="sun" x1="0" y1="0" x2=".6" y2="1"><stop offset="0" stopColor="#f9c22f" /><stop offset="1" stopColor="#f26c12" /></linearGradient>
          </defs>
          <circle cx="11" cy="13" r="10" fill="url(#sun)" />
          <circle cx="19" cy="4" r="3" fill="#c9281f" />
        </svg>
        <span className="ml-[9px] w-[38px] text-[13.500px] tracking-[-0.1px]">35°C</span>
        <span className="w-[62px] text-[13.500px] tracking-[-0.2px]">Sunny</span>
        <Icon w={14} h={10}><path d="M1.500 8L7 2.500 12.500 8" strokeWidth="1.500" stroke="#111" /></Icon>
        <Icon w={13} h={18} className="ml-[11px] text-black">
          <path d="M1.500 5.500h7v7h-7zM9 8l2.500-1.500v5L9 10M2.500 3c1.500-2 4.500-2 6 0M2.500 15c1.500 2 4.500 2 6 0" strokeWidth="1.200" />
        </Icon>
        <Icon w={17} h={18} className="ml-[8px] text-black">
          <path d="M1.500 3.500h9l4-2v13h-13zM4 10.500a3.500 3.500 0 0 1 5.500-3M11 7.500a3.500 3.500 0 0 1-5.500 4" strokeWidth="1.200" />
          <circle cx="13" cy="13.500" r="3.500" fill="#ff9b0a" stroke="none" />
        </Icon>
        <Icon w={16} h={12} className="ml-[8px] text-black">
          <path d="M1 1.500h12v8H1zM14.500 4v3" strokeWidth="1.300" /><path d="M3 3.500h4v4H3z" fill="#000" stroke="none" />
        </Icon>
        <Icon w={14} h={14} className="ml-[9px] text-[#555]">
          <path d="M1 12.500A11.500 11.500 0 0 1 12.500 1.500M4 12.500a8.500 8.500 0 0 1 8.500-8M7 12.500a5.500 5.500 0 0 1 5.500-5" strokeWidth="1.200" />
          <circle cx="11.500" cy="11.500" r="1.600" fill="#000" stroke="none" />
        </Icon>
        <Icon w={17} h={14} className="ml-[7px] text-black">
          <path d="M1 4.500h2.500L7.500 1.500v11l-4-3H1zM9.500 4.500c1 1.500 1 3.500 0 5" strokeWidth="1.200" />
          <path d="M12 3c2 2.500 2 5.500 0 8M14.500 1.500c2.500 3.500 2.500 7.500 0 11" strokeWidth="1" stroke="#888" />
        </Icon>
        <div className="ml-[7px] flex w-[58px] flex-col items-center pr-px pb-px text-[11.500px] leading-[18px] tracking-[-0.2px] whitespace-nowrap">
          <span>11:57 AM</span>
          <span>4/20/2023</span>
        </div>
        <div className="ml-1 flex h-10 w-[40px] items-center justify-center bg-[#dbe7ee]">
          <Icon w={18} h={18} className="text-black"><path d="M1.500 2h15v12h-4.500v3L9 14H1.500z" strokeWidth="1.300" /></Icon>
        </div>
        <div className="ml-[8px] h-10 w-[5px] border-l border-[#9fb0ba]" />
      </div>
    </footer>
  );
}

export default function App() {
  return (
    <div className="flex h-[768px] w-[1366px] flex-col overflow-hidden bg-[#f5f5f5] font-['Open_Sans',sans-serif] leading-[18px]">
      <TitleBar />
      <MenuBar />
      <Toolbar />
      <main className="flex h-[593px] shrink-0">
        <DataPane />
        <Cards />
        <Viz />
      </main>
      <SheetTabs />
      <StatusBar />
      <Taskbar />
    </div>
  );
}
